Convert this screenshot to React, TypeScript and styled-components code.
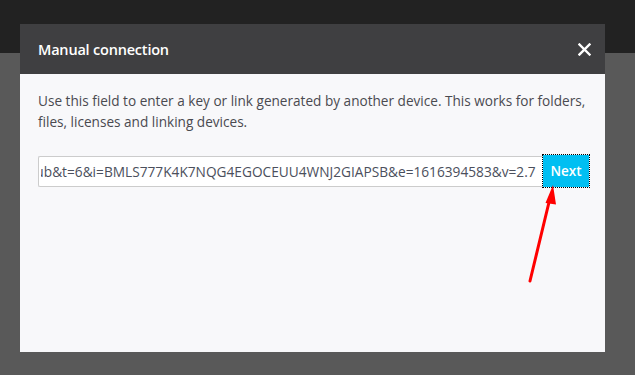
import React, { useLayoutEffect, useRef } from "react";
import styled, { createGlobalStyle } from "styled-components";

const GlobalStyle = createGlobalStyle`
  html, body {
    margin: 0;
    padding: 0;
    height: 100%;
  }
  body {
    font-family: "Open Sans", "Liberation Sans", sans-serif;
    background: #595959;
  }
`;

const Page = styled.div`
  position: relative;
  display: flex;
  flex-direction: column;
  width: 100%;
  height: 375px;
  overflow: hidden;
`;

const TopBar = styled.div`
  height: 53px;
  background: #222222;
`;

const Backdrop = styled.div`
  flex: 1;
  background: #595959;
`;

const Dialog = styled.div`
  position: absolute;
  left: 20px;
  top: 24px;
  width: 585px;
  height: 328px;
  display: flex;
  flex-direction: column;
  background: #f8f8fa;
`;

const DialogHeader = styled.div`
  display: flex;
  align-items: center;
  justify-content: space-between;
  height: 50px;
  padding: 0 13px 0 18px;
  background: #3f3f41;
`;

const DialogTitle = styled.h2`
  margin: 0;
  font-size: 14.5px;
  font-weight: 600;
  color: #ffffff;
  letter-spacing: -0.2px;
`;

const CloseButton = styled.button`
  display: flex;
  align-items: center;
  justify-content: center;
  width: 16px;
  height: 16px;
  padding: 0;
  border: 0;
  background: transparent;
  cursor: pointer;
`;

const DialogBody = styled.div`
  padding: 16px 16px 0 18px;
`;

const Description = styled.p`
  margin: 0 0 24px;
  font-size: 13.6px;
  line-height: 21px;
  color: #4a4a50;
`;

const LinkRow = styled.div`
  display: flex;
  align-items: stretch;
  height: 31px;
`;

const LinkInput = styled.input`
  flex: 1;
  min-width: 0;
  box-sizing: border-box;
  height: 31px;
  padding: 0 7px 0 2px;
  border: 1px solid #cccccc;
  border-right: 0;
  border-radius: 2px 0 0 2px;
  background: #ffffff;
  font-family: "Open Sans", "Liberation Sans", sans-serif;
  font-size: 13.7px;
  color: #4b4f5c;
  outline: none;
`;

const NextButton = styled.button`
  box-sizing: border-box;
  width: 46px;
  height: 32px;
  margin-top: -1px;
  padding: 0;
  border: 0;
  background: #00bff2;
  color: #ffffff;
  font-family: "Open Sans", "Liberation Sans", sans-serif;
  font-size: 13.5px;
  font-weight: 600;
  outline: 1px dotted #000000;
  outline-offset: 0;
  cursor: pointer;
`;

const Annotation = styled.svg`
  position: absolute;
  left: 0;
  top: 0;
  pointer-events: none;
`;

const LINK =
  "https://link.resilio.com/#f=Shared&sz=0&s=Q3RZ7Y&n=pub&t=6&i=BMLS777K4K7NQG4EGOCEUU4WNJ2GIAPSB&e=1616394583&v=2.7";

export default function App() {
  const inputRef = useRef<HTMLInputElement>(null);

  useLayoutEffect(() => {
    const el = inputRef.current;
    if (el) el.scrollLeft = el.scrollWidth;
  }, []);

  return (
    <>
      <GlobalStyle />
      <Page>
        <TopBar />
        <Backdrop />
        <Dialog role="dialog" aria-label="Manual connection">
          <DialogHeader>
            <DialogTitle>Manual connection</DialogTitle>
            <CloseButton aria-label="Close">
              <svg width="13" height="13" viewBox="0 0 13 13">
                <path
                  d="M1.5 1.5 L11.5 11.5 M11.5 1.5 L1.5 11.5"
                  stroke="#ffffff"
                  strokeWidth="2.4"
                  strokeLinecap="square"
                />
              </svg>
            </CloseButton>
          </DialogHeader>
          <DialogBody>
            <Description>
              Use this field to enter a key or link generated by another
              device. This works for folders, files, licenses and linking
              devices.
            </Description>
            <LinkRow>
              <LinkInput ref={inputRef} defaultValue={LINK} readOnly />
              <NextButton>Next</NextButton>
            </LinkRow>
          </DialogBody>
        </Dialog>
        <Annotation width="635" height="375" viewBox="0 0 635 375">
          <line
            x1="530"
            y1="281"
            x2="550.5"
            y2="196"
            stroke="#ff0000"
            strokeWidth="3"
            strokeLinecap="round"
          />
          <polygon points="553,185 545.5,203 556,204.5" fill="#ff0000" />
        </Annotation>
      </Page>
    </>
  );
}
